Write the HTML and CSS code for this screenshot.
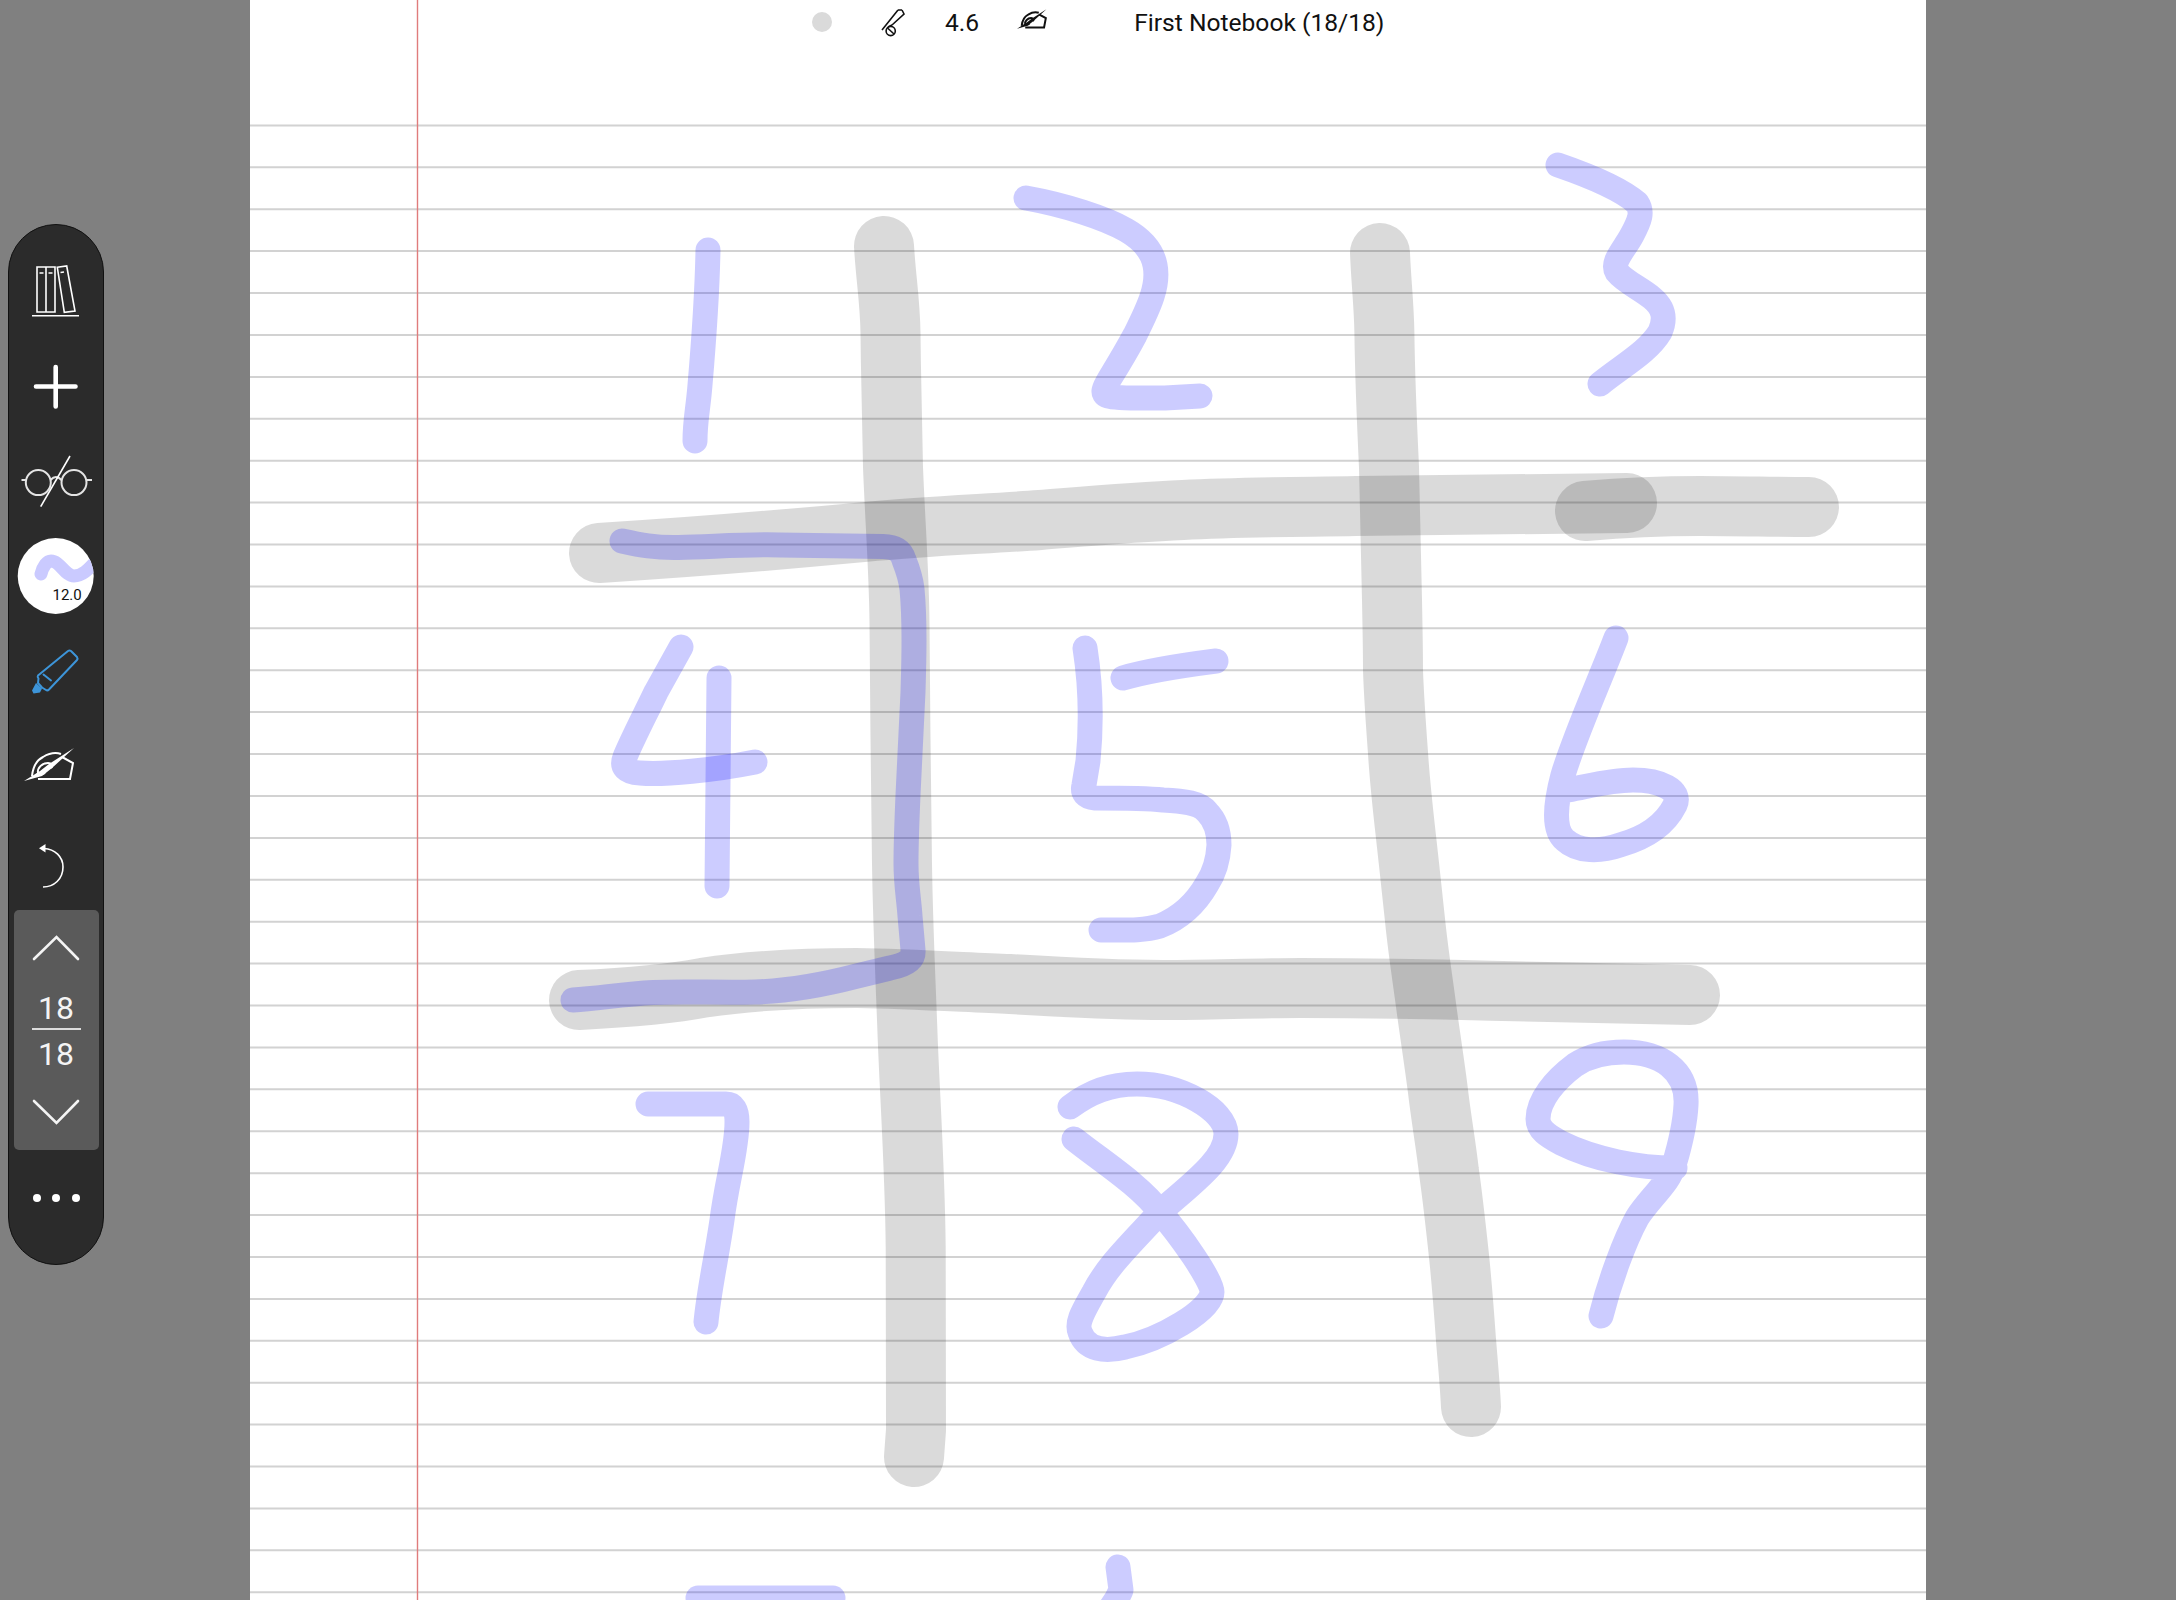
FILE: index.html
```html
<!DOCTYPE html>
<html lang="en">
<head>
<meta charset="utf-8">
<title>First Notebook</title>
<link rel="stylesheet" href="styles.css">
</head>
<body>
<svg class="defs" width="0" height="0" aria-hidden="true">
  <symbol id="hand" viewBox="9 13 51 33">
    <path class="hand-line" d="M17 41C18 32 22 25 28 22C33 19 40 17 46 19"/>
    <path class="hand-line" d="M47 22L58 28L55 44H23"/>
    <path class="hand-line" d="M23 38C22 33 27 28 33 28C37 28 38 31 36 33"/>
    <path class="hand-line" d="M21 40C24 38 27 40 30 38"/>
    <path class="hand-fill" d="M59 13L34 29L25 36L9 46L27 41L37 33Z"/>
  </symbol>
</svg>

<main class="page">
  <svg class="ink" viewBox="250 0 1676 1600" aria-hidden="true">
    <path class="rule" d="M250 125.4H1926M250 167.3H1926M250 209.2H1926M250 251.1H1926M250 293H1926M250 335H1926M250 376.9H1926M250 418.8H1926M250 460.7H1926M250 502.6H1926M250 544.5H1926M250 586.4H1926M250 628.3H1926M250 670.2H1926M250 712.1H1926M250 754.1H1926M250 796H1926M250 837.9H1926M250 879.8H1926M250 921.7H1926M250 963.6H1926M250 1005.5H1926M250 1047.4H1926M250 1089.3H1926M250 1131.2H1926M250 1173.2H1926M250 1215.1H1926M250 1257H1926M250 1298.9H1926M250 1340.8H1926M250 1382.7H1926M250 1424.6H1926M250 1466.5H1926M250 1508.4H1926M250 1550.3H1926M250 1592.3H1926"/>
    <path class="margin" d="M417.5 0V1600"/>

    <path class="marker" d="M884 246C886 280 890 300 890.5 333C891 380 892 430 893 467C895 520 899 570 899.5 623C900 700 901 790 902 864C903 930 906 990 907.6 1036C910 1100 915 1170 915.7 1248C916 1320 916 1380 916 1430L914 1457"/>
    <path class="marker" d="M1380 253C1381 280 1384 305 1384.4 333C1385 380 1387 425 1389 467L1392 600C1392.5 625 1393 650 1393 670C1394 700 1396 725 1398 753C1400 785 1403 810 1406 837C1409 865 1412 890 1415 920C1418 950 1422 975 1426 1005C1430 1035 1434 1060 1437.6 1088C1441 1118 1446 1145 1449 1172C1453 1200 1456 1228 1459 1256C1462 1285 1464 1312 1466 1340C1468 1365 1470 1385 1471 1407"/>
    <path class="marker" d="M599 553C680 548 780 540 865 532C925 526 985 524 1040 520C1090 516 1135 512 1183 510C1240 507 1300 507 1356 506L1627 503"/>
    <path class="marker" d="M1585 511C1620 508 1660 506 1700 506C1740 506 1775 507 1809 507"/>
    <path class="marker" d="M579 1000C620 998 665 995 704 987.6C755 980 805 978 857 978C910 979 960 982 1010 984C1060 987 1110 990 1163 990C1210 990 1255 988 1300 988C1365 988 1430 989 1491 990.7L1690 995"/>

    <path class="pen" d="M708 250C707 300 703 350 700 385C698 410 695 420 695 441"/>
    <path class="pen" d="M1026 198C1065 205 1105 218 1126 230C1140 238 1152 250 1155 265C1159 285 1150 305 1135 335C1127 350 1118 365 1110 378C1104 388 1101 394 1108 396C1118 399 1145 398 1165 398L1200 396"/>
    <path class="pen" d="M1558 165C1590 176 1622 190 1637 203C1643 212 1640 220 1632 235C1624 250 1611 262 1617 272C1625 282 1640 288 1652 298C1664 308 1666 318 1660 332C1648 352 1622 366 1600 384"/>
    <path class="pen" d="M622 541C640 545 655 548 678.6 547.5C710 547 745 544 780 545L883 546.5C895 547 901 550 904 560C908 570 911 580 912 589C914 610 914 620 914 640.5C914 660 913.5 675 913 692L908 795C907 820 906 840 906 864C906 885 909 900 910 916L913 950C914 960 905 965 890 968L857 976C830 983 790 991 755 992C720 993 685 991 653 992.5C625 994 600 998 573 1000"/>
    <path class="pen" d="M681 647L656 692C645 715 632 740 625 757Q619 772 640 773C665 775 715 770 755 762"/>
    <path class="pen" d="M719 678L717 886"/>
    <path class="pen" d="M1085 648C1090 680 1092 720 1088 761L1084 785Q1081 797 1095 798C1120 798 1145 798 1163 800C1185 801 1200 803 1207 812C1217 822 1219 835 1219 845C1218 862 1213 875 1207 884C1195 905 1180 918 1160 926C1143 931 1125 930 1101 930"/>
    <path class="pen" d="M1123 678C1150 670 1185 665 1216 661"/>
    <path class="pen" d="M1616 638C1600 680 1575 735 1563 775C1555 805 1553 830 1565 840C1578 852 1600 852 1620 845C1645 838 1665 825 1675 805C1682 790 1660 780 1633 780C1610 780 1590 786 1568 790"/>
    <path class="pen" d="M648 1104L726 1104Q737 1104 737 1122C737 1150 727 1180 722 1220C717 1255 709 1290 706 1322"/>
    <path class="pen" d="M1070 1107C1090 1092 1110 1084 1137 1084C1180 1084 1226 1110 1226 1134C1226 1160 1190 1185 1160 1212C1130 1245 1108 1265 1094 1292C1084 1310 1076 1322 1080 1332C1086 1350 1105 1352 1125 1347C1160 1340 1212 1310 1212 1292C1212 1280 1180 1235 1160 1212C1140 1185 1100 1160 1074 1139"/>
    <path class="pen" d="M1675 1168C1640 1168 1595 1160 1561 1143C1548 1136 1538 1130 1538 1119C1538 1100 1555 1080 1575 1065C1590 1055 1605 1052 1624 1052C1660 1052 1688 1070 1686 1105C1685 1125 1680 1145 1674 1165C1670 1182 1648 1200 1637 1218C1625 1240 1610 1280 1601 1316"/>
    <path class="pen" d="M698 1598H833"/>
    <path class="pen" d="M1118 1567L1121 1590Q1115 1605 1100 1620"/>
  </svg>

  <header class="topbar">
    <span class="color-dot"></span>
    <svg class="pen-off" viewBox="880 5 26 30" aria-hidden="true">
      <path class="thin" d="M898 8L882 28M902 8L898 8M902 8L904 12L892 23M888 25L892 23"/>
      <circle class="thin" cx="890.7" cy="29" r="4.6"/>
      <path class="thin" d="M887.5 26L894 32"/>
    </svg>
    <span class="pen-size">4.6</span>
    <svg class="hand-off" aria-hidden="true"><use href="#hand"/></svg>
    <span class="note-title">First Notebook (18/18)</span>
  </header>
</main>

<nav class="toolbar">
  <div class="tool">
    <svg class="tool-icon" viewBox="9 244 94 95" aria-hidden="true">
      <path class="line" d="M37 267H46V312H37ZM46 267H55V312H46ZM57.3 267.3L66.7 266L75 311L64.3 312.3Z"/>
      <path class="line" d="M39.5 273H43.5M48.5 273H52.5M60.5 272.5L64 272M32 315.7H79"/>
    </svg>
  </div>
  <div class="tool">
    <svg class="tool-icon" viewBox="9 339 94 95" aria-hidden="true">
      <path class="plus" d="M36 386.5H75.5M55.7 367V406.5"/>
    </svg>
  </div>
  <div class="tool">
    <svg class="tool-icon" viewBox="9 434 94 95" aria-hidden="true">
      <circle class="lens" cx="38.3" cy="482.6" r="12.5"/>
      <circle class="lens" cx="74" cy="482.6" r="12.5"/>
      <path class="lens" d="M21.5 480H26M87 480H92M50.5 480Q56 474 61.5 480"/>
      <path class="line" d="M70 456L40.7 506.7"/>
    </svg>
  </div>
  <div class="tool">
    <svg class="tool-icon" viewBox="9 529 94 95">
      <defs><clipPath id="brush-clip"><circle cx="55.7" cy="576" r="38"/></clipPath></defs>
      <circle class="brush-bg" cx="55.7" cy="576" r="38"/>
      <path class="brush-wave" clip-path="url(#brush-clip)" d="M41 574C43 566 47 561 51 561C60 561 65 576 74 576C82 576 88 570 96 561"/>
      <text class="brush-size" x="52.5" y="600">12.0</text>
    </svg>
  </div>
  <div class="tool">
    <svg class="tool-icon" viewBox="9 624 94 95" aria-hidden="true">
      <path class="hi" d="M68 651Q69.5 650 71 651L77 657Q78 658.5 77 660L49 689.5Q47.5 691 46 690L42 687.5L38 683L38.5 678.5Q37 677 38 675.5Z"/>
      <path class="hi" d="M43.5 674.5L51 680.5"/>
      <path class="hi-tip" d="M36 683L42 688.5L40 692.5L33.5 693.5L32 690.5Z"/>
    </svg>
  </div>
  <div class="tool">
    <svg class="tool-icon hand-big" viewBox="9 719 94 95" aria-hidden="true">
      <use href="#hand" x="24" y="748" width="51" height="33"/>
    </svg>
  </div>
  <div class="tool">
    <svg class="tool-icon" viewBox="9 813 94 95" aria-hidden="true">
      <path class="line" d="M44 847.5C55 848 63 856 63 866C63 878 54 886 43 886"/>
      <path class="fill" d="M39 847.3L45.5 843V851.5Z"/>
    </svg>
  </div>
  <div class="pager">
    <svg class="pager-arrow-up" viewBox="13 910 85 78" aria-hidden="true"><path class="chev" d="M33 959L55.5 937L77 959"/></svg>
    <span class="pager-num">18</span>
    <span class="pager-rule"></span>
    <span class="pager-num pager-total">18</span>
    <svg class="pager-arrow-down" viewBox="13 1074 85 76" aria-hidden="true"><path class="chev" d="M33 1101L55.5 1123L77 1101"/></svg>
  </div>
  <div class="more">
    <span class="more-dot"></span><span class="more-dot"></span><span class="more-dot"></span>
  </div>
</nav>
</body>
</html>
```
FILE: styles.css
```css
html, body {
  margin: 0;
  height: 1600px;
  overflow: hidden;
}
body {
  position: relative;
  background: #808080;
  font-family: Roboto, "Liberation Sans", sans-serif;
}
.defs { position: absolute; }

/* Notebook page */
.page {
  position: relative;
  box-sizing: border-box;
  width: 1676px;
  height: 1600px;
  margin-left: 250px;
  background: #fff;
  overflow: hidden;
}
.ink {
  position: absolute;
  top: 0;
  left: 0;
  width: 1676px;
  height: 1600px;
  fill: none;
}
.rule { stroke: #d2d2d2; stroke-width: 2; }
.margin { stroke: #e07c7c; stroke-width: 1.4; }
.marker {
  stroke: #000;
  stroke-opacity: .145;
  stroke-width: 60;
  stroke-linecap: round;
  stroke-linejoin: round;
}
.pen {
  stroke: #00f;
  stroke-opacity: .2;
  stroke-width: 25;
  stroke-linecap: round;
  stroke-linejoin: round;
}

/* Header */
.topbar {
  position: relative;
  display: flex;
  align-items: center;
  height: 44px;
  padding-left: 562px;
  color: #111;
}
.color-dot {
  width: 20px;
  height: 20px;
  border-radius: 50%;
  background: #dadada;
}
.pen-off {
  width: 26px;
  height: 30px;
  margin-left: 48px;
  fill: none;
}
.thin { stroke: #111; stroke-width: 1.6; fill: none; }
.pen-size {
  margin-left: 39px;
  font-size: 24.6px;
}
.hand-off {
  width: 30px;
  height: 22px;
  margin-left: 38px;
  margin-top: -6px;
  color: #111;
  stroke-width: 3.4;
}
.note-title {
  margin-left: 87px;
  font-size: 24.6px;
  white-space: nowrap;
}
.hand-line { fill: none; stroke: currentColor; }
.hand-fill { fill: currentColor; }

/* Floating toolbar */
.toolbar {
  position: absolute;
  top: 224px;
  left: 8px;
  box-sizing: border-box;
  width: 96px;
  height: 1041px;
  padding-top: 19px;
  display: flex;
  flex-direction: column;
  align-items: center;
  background: #2b2b2b;
  border: 1px solid #111;
  border-radius: 48px;
}
.tool {
  width: 94px;
  height: 95px;
  flex: none;
}
.tool-icon {
  display: block;
  width: 94px;
  height: 95px;
  fill: none;
}
.hand-big { color: #fff; stroke-width: 2; }
.line { stroke: #fff; stroke-width: 1.6; fill: none; }
.fill { fill: #fff; }
.plus { stroke: #fff; stroke-width: 4.6; stroke-linecap: round; }
.lens { stroke: #e4e4e4; stroke-width: 2; fill: none; }
.brush-bg { fill: #fff; }
.brush-wave {
  fill: none;
  stroke: #cacaff;
  stroke-width: 13;
  stroke-linecap: round;
}
.brush-size { fill: #111; font-size: 15px; }
.hi { fill: none; stroke: #3d95d9; stroke-width: 2; stroke-linejoin: round; stroke-linecap: round; }
.hi-tip { fill: #3d95d9; }

.pager {
  width: 85px;
  height: 240px;
  margin-top: 1px;
  flex: none;
  display: flex;
  flex-direction: column;
  align-items: center;
  background: #5a5a5a;
  border-radius: 5px;
  color: #f4f4f4;
}
.pager-arrow-up { display: block; flex: none; width: 85px; height: 78px; }
.pager-arrow-down { display: block; flex: none; width: 85px; height: 76px; }
.chev {
  fill: none;
  stroke: #f4f4f4;
  stroke-width: 2.6;
  stroke-linecap: round;
  stroke-linejoin: miter;
}
.pager-num {
  display: block;
  height: 40px;
  font-size: 32px;
  line-height: 40px;
}
.pager-rule {
  display: block;
  width: 49px;
  height: 1.5px;
  background: #dcdcdc;
}
.pager-total { margin-top: 4px; }

.more {
  flex: 1;
  display: flex;
  align-items: center;
  justify-content: center;
  gap: 11.5px;
  padding-bottom: 18px;
}
.more-dot {
  width: 8px;
  height: 8px;
  border-radius: 50%;
  background: #fff;
}
```
